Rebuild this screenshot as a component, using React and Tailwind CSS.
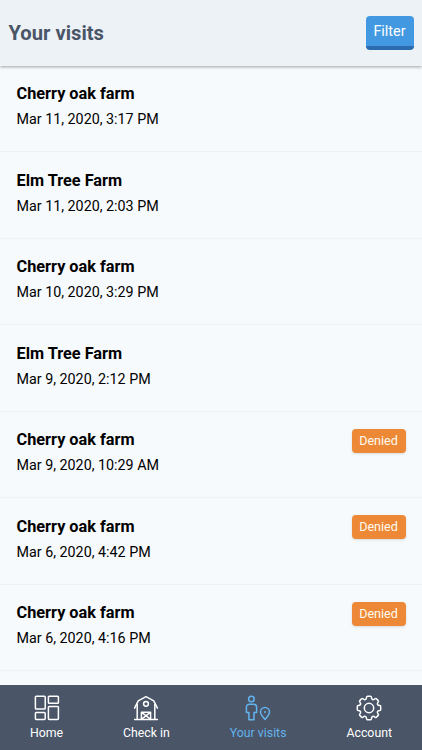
const visits = [
  { id: 1, name: 'Cherry oak farm', date: 'Mar 11, 2020, 3:17 PM' },
  { id: 2, name: 'Elm Tree Farm', date: 'Mar 11, 2020, 2:03 PM' },
  { id: 3, name: 'Cherry oak farm', date: 'Mar 10, 2020, 3:29 PM' },
  { id: 4, name: 'Elm Tree Farm', date: 'Mar 9, 2020, 2:12 PM' },
  { id: 5, name: 'Cherry oak farm', date: 'Mar 9, 2020, 10:29 AM', denied: true },
  { id: 6, name: 'Cherry oak farm', date: 'Mar 6, 2020, 4:42 PM', denied: true },
  { id: 7, name: 'Cherry oak farm', date: 'Mar 6, 2020, 4:16 PM', denied: true }
];

const HomeIcon = () => (
  <svg className="w-[26px] h-[26px]" viewBox="0 0 26 26" fill="none" stroke="currentColor" strokeWidth="1.5">
    <rect x="1.4" y="1.3" width="9.8" height="12.8" rx="0.8" />
    <rect x="14.4" y="1.3" width="10" height="6.9" rx="0.8" />
    <rect x="1.4" y="17.6" width="9.8" height="6.8" rx="0.8" />
    <rect x="14.4" y="11.6" width="10" height="12.8" rx="0.8" />
  </svg>
);

const BarnIcon = () => (
  <svg className="w-[26px] h-[26px]" viewBox="0 0 26 26" fill="none" stroke="currentColor" strokeWidth="1.5" strokeLinecap="round" strokeLinejoin="round">
    <path d="M1.6 13.2 5.2 5.8 13 1.7l7.8 4.1 3.6 7.4" />
    <path d="M4.2 9.4v15M21.8 9.4v15M1.6 24.4h22.8" />
    <circle cx="13" cy="8.8" r="2.4" />
    <path d="M8.4 24.4v-7.2h9.2v7.2M8.4 17.2l9.2 7.2M17.6 17.2l-9.2 7.2" />
  </svg>
);

const VisitsIcon = () => (
  <svg className="w-[26px] h-[26px]" viewBox="0 0 26 26" fill="none" stroke="currentColor" strokeWidth="1.5" strokeLinejoin="round">
    <circle cx="6.4" cy="4" r="2.8" />
    <path d="M3.9 24.8v-7.3H1.4V12.2a3 3 0 0 1 3-3h4.2a3 3 0 0 1 3 3v5.3H9v7.3z" />
    <path d="M20 24.4c-2.3-2.6-4.5-5-4.5-7.4a4.5 4.5 0 0 1 9 0c0 2.4-2.2 4.8-4.5 7.4z" />
    <circle cx="20" cy="17" r="1" fill="currentColor" stroke="none" />
  </svg>
);

const GearIcon = () => (
  <svg className="w-[26px] h-[26px]" viewBox="0 0 26 26" fill="none" stroke="currentColor" strokeWidth="1.5" strokeLinejoin="round">
    <path d="M11.6 1.3h2.8Q15.3 1.3 15.4 2.2C15.6 4.7 17.2 5.4 19.1 3.8Q19.8 3.2 20.4 3.8L22.2 5.6Q22.8 6.2 22.2 6.9C20.6 8.8 21.3 10.4 23.8 10.6Q24.7 10.7 24.7 11.6V14.4Q24.7 15.3 23.8 15.4C21.3 15.6 20.6 17.2 22.2 19.1Q22.8 19.8 22.2 20.4L20.4 22.2Q19.8 22.8 19.1 22.2C17.2 20.6 15.6 21.3 15.4 23.8Q15.3 24.7 14.4 24.7H11.6Q10.7 24.7 10.6 23.8C10.4 21.3 8.8 20.6 6.9 22.2Q6.2 22.8 5.6 22.2L3.8 20.4Q3.2 19.8 3.8 19.1C5.4 17.2 4.7 15.6 2.2 15.4Q1.3 15.3 1.3 14.4V11.6Q1.3 10.7 2.2 10.6C4.7 10.4 5.4 8.8 3.8 6.9Q3.2 6.2 3.8 5.6L5.6 3.8Q6.2 3.2 6.9 3.8C8.8 5.4 10.4 4.7 10.6 2.2Q10.7 1.3 11.6 1.3z" />
    <circle cx="13" cy="13" r="4.7" />
  </svg>
);

const tabs = [
  { id: 'home', label: 'Home', icon: <HomeIcon /> },
  { id: 'checkin', label: 'Check in', icon: <BarnIcon /> },
  { id: 'visits', label: 'Your visits', icon: <VisitsIcon />, active: true },
  { id: 'account', label: 'Account', icon: <GearIcon /> }
];

const VisitRow = ({ visit }) => (
  <li className="flex justify-between items-start h-[86.5px] px-[16.5px] pt-[17px] border-b border-[#edf2f7]">
    <div className="pt-[0.5px]">
      <h2 className="text-[16.3px] leading-[22px] font-bold">{visit.name}</h2>
      <p className="mt-[3px] text-[14.3px] leading-[23px]">{visit.date}</p>
    </div>
    {visit.denied && (
      <span className="w-[54px] h-[24px] rounded bg-[#ed8936] text-[#fffaf0] text-[12.6px] leading-[24px] text-center shadow-sm">
        Denied
      </span>
    )}
  </li>
);

const App = () => {
  return (
    <div className="flex flex-col h-screen overflow-hidden bg-[#f7fafc] text-black font-[Roboto,sans-serif]">
      <header className="relative flex justify-between items-center h-[65.5px] shrink-0 px-[8.5px] bg-[#edf2f7] shadow-[0_1px_3px_rgba(0,0,0,0.35)]">
        <h1 className="pt-px text-[20.2px] font-bold text-[#4a5568]">Your visits</h1>
        <button className="w-[48px] h-[34px] rounded bg-[#4299e1] border-b-4 border-[#2b6cb0] text-white text-[14.4px] leading-[31px]">
          Filter
        </button>
      </header>

      <ul className="flex-1 overflow-hidden">
        {visits.map((visit) => (
          <VisitRow key={visit.id} visit={visit} />
        ))}
      </ul>

      <nav className="flex justify-around h-[65.5px] shrink-0 pt-[10.5px] bg-[#4a5568] text-white">
        {tabs.map((tab) => (
          <a key={tab.id} className={`flex flex-col items-center ${tab.active ? 'text-[#63b3ed]' : ''}`}>
            {tab.icon}
            <span className="mt-[3px] text-[12.3px] leading-[18px]">{tab.label}</span>
          </a>
        ))}
      </nav>
    </div>
  );
};

export default App;
